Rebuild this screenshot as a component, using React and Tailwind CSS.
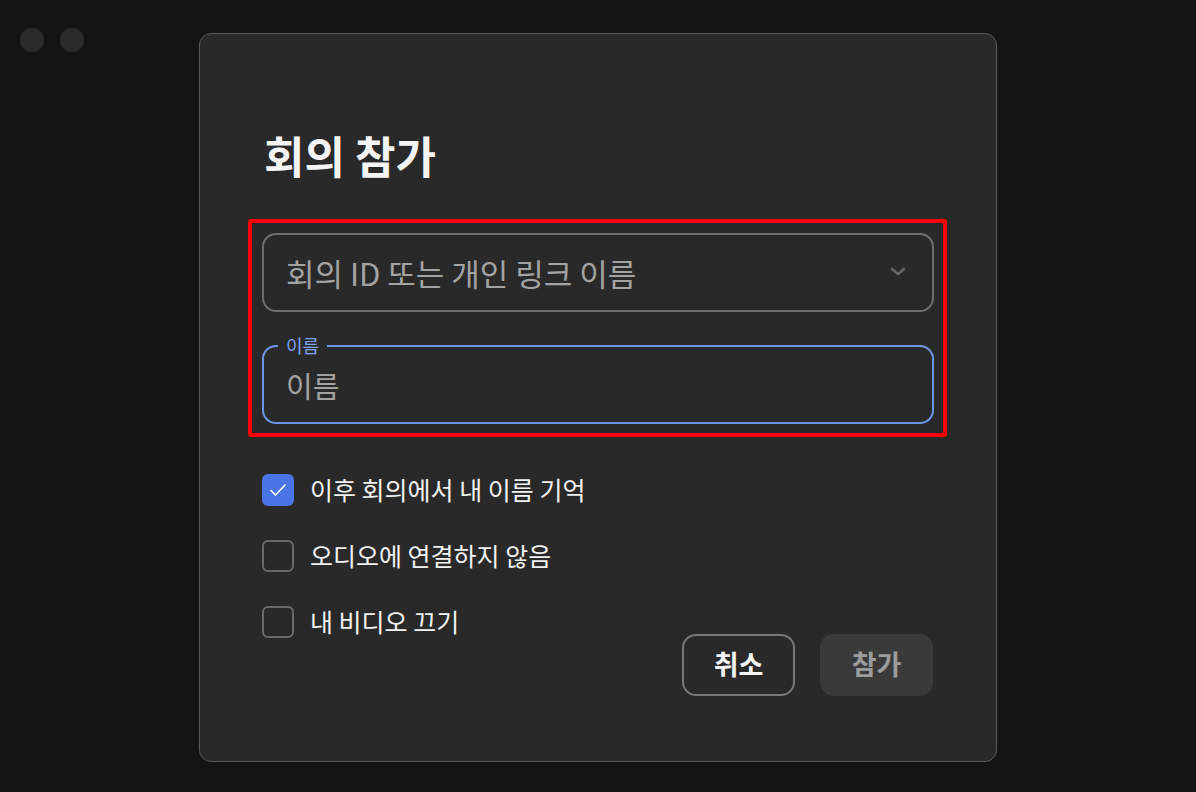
import React from "react";

const font = { fontFamily: '"Noto Sans CJK KR", "Noto Sans", sans-serif' };

const Check = ({ checked, label }) => (
  <label className="flex items-center gap-4 h-8">
    <span
      className={
        checked
          ? "w-8 h-8 rounded-[6px] bg-[#4a75e6] flex items-center justify-center"
          : "w-8 h-8 rounded-[6px] border-2 border-[#6a6a6a]"
      }
    >
      {checked && (
        <svg width="20" height="20" viewBox="0 0 20 20" fill="none">
          <path d="M3 10.5l4.5 4.5 9.5-10" stroke="#fff" strokeWidth="1.7" strokeLinecap="round" strokeLinejoin="round" />
        </svg>
      )}
    </span>
    <span className="text-[25px] text-[#f2f2f2] leading-none">{label}</span>
  </label>
);

export default function App() {
  return (
    <div className="relative h-[792px] w-full bg-[#141414] flex items-center justify-center" style={font}>
      <div className="absolute left-[20px] top-[28px] flex gap-4">
        <span className="w-6 h-6 rounded-full bg-[#2b2b2b]" />
        <span className="w-6 h-6 rounded-full bg-[#2b2b2b]" />
      </div>

      <div className="w-[798px] h-[729px] mt-[2px] rounded-[12px] border border-[#5a5a5a] bg-[#292929] pl-[62px] pr-[63px] pt-[99px]">
        <h1 className="text-[44px] font-bold text-[#f4f4f4] leading-none ml-[2px]">회의 참가</h1>

        <div className="mt-[42px] -mx-[14px] border-4 border-[#ff0000] rounded-[3px] pl-[10px] pr-[9px] pt-[10px] pb-[9px]">
          <div className="h-[79px] rounded-[14px] border-2 border-[#6e6e6e] flex items-center justify-between pl-[22px] pr-[26px]">
            <span className="text-[31px] text-[#a3a3a3] leading-none">회의 ID 또는 개인 링크 이름</span>
            <svg width="16" height="10" viewBox="0 0 16 10" fill="none">
              <path d="M2 2l6 5 6-5" stroke="#666666" strokeWidth="2.6" strokeLinecap="round" strokeLinejoin="round" />
            </svg>
          </div>

          <div className="relative mt-[33px] h-[79px] rounded-[14px] border-2 border-[#6d96e8] flex items-center pl-[22px]">
            <span className="absolute -top-[14px] left-[14px] px-[8px] bg-[#292929] text-[18px] text-[#7ea3ef] leading-[24px]">
              이름
            </span>
            <span className="text-[29px] text-[#a3a3a3] leading-none mt-[2px]">이름</span>
          </div>
        </div>

        <div className="flex justify-between items-start mt-[37px]">
          <div className="flex flex-col gap-[34px]">
            <Check checked label="이후 회의에서 내 이름 기억" />
            <Check label="오디오에 연결하지 않음" />
            <Check label="내 비디오 끄기" />
          </div>
          <div className="flex gap-[25px] mt-[160px]">
            <button className="w-[113px] h-[62px] rounded-[14px] border-2 border-[#777777] text-[27px] font-bold text-[#f4f4f4]">
              취소
            </button>
            <button className="w-[113px] h-[62px] rounded-[14px] bg-[#3a3a3a] text-[27px] font-bold text-[#9c9c9c]">
              참가
            </button>
          </div>
        </div>
      </div>
    </div>
  );
}
